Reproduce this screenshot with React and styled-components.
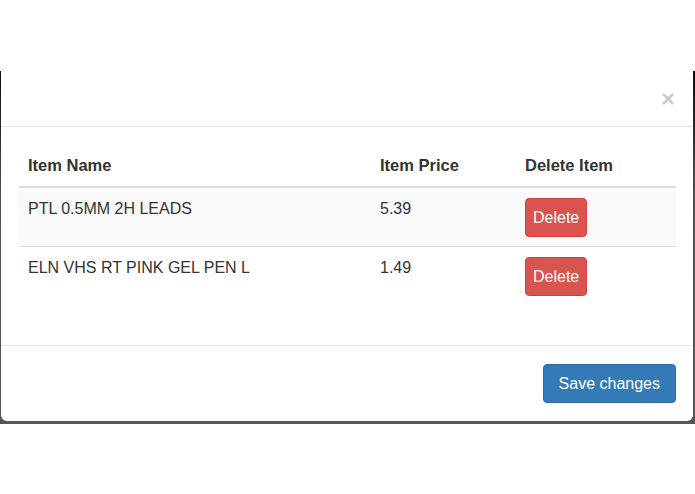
import React from 'react';
import styled, { createGlobalStyle } from 'styled-components';

const GlobalStyle = createGlobalStyle`
    html, body {
        margin: 0;
        padding: 0;
        background: #ffffff;
        font-family: "Liberation Sans", Arial, sans-serif;
        color: #333333;
    }
`

const Page = styled.div`
    width: 695px;
    height: 494px;
    padding-top: 71px;
    box-sizing: border-box;
    overflow: hidden;
`

const Backdrop = styled.div`
    background: linear-gradient(#0c0c0c, #4f4f4f 35%, #555555);
    padding: 0 2px 3px 1px;
`

const Modal = styled.div`
    background: #ffffff;
    border-radius: 0 0 6px 6px;
    overflow: hidden;
`

const Header = styled.div`
    height: 55px;
    padding: 0 18px;
    display: flex;
    align-items: center;
    justify-content: flex-end;
    border-bottom: 1px solid #e5e5e5;
`

const CloseButton = styled.button`
    border: 0;
    background: none;
    padding: 0;
    margin-top: 1px;
    font-family: "Liberation Sans", Arial, sans-serif;
    font-size: 24px;
    font-weight: 700;
    line-height: 1;
    color: #000000;
    opacity: 0.2;
    cursor: pointer;
`

const Body = styled.div`
    padding: 17px 17px 17px 18px;
`

const Table = styled.table`
    width: 100%;
    border-collapse: collapse;
    border-spacing: 0;
    margin-bottom: 23px;
    font-size: 16px;

    th, td {
        padding: 9px;
        text-align: left;
        vertical-align: top;
        line-height: 24px;
    }

    th {
        font-weight: 700;
        font-size: 16.5px;
        border-bottom: 2px solid #dddddd;
        vertical-align: bottom;
    }

    td {
        border-top: 1px solid #dddddd;
    }

    thead tr th {
        border-top: 0;
    }

    tbody tr:first-child td {
        border-top: 0;
    }
`

const Row = styled.tr`
    background: ${props => props.striped ? '#f9f9f9' : 'transparent'};
`

const Button = styled.button`
    font-family: "Liberation Sans", Arial, sans-serif;
    font-size: 16px;
    line-height: 24px;
    color: #ffffff;
    border: 1px solid;
    border-radius: 4px;
    cursor: pointer;
`

const DeleteButton = styled(Button)`
    height: 39px;
    padding: 0 7px;
    margin-top: 1px;
    background: #d9534f;
    border-color: #d43f3a;
`

const Footer = styled.div`
    padding: 18px 17px 18px;
    border-top: 1px solid #e5e5e5;
    display: flex;
    justify-content: flex-end;
`

const SaveButton = styled(Button)`
    height: 39px;
    padding: 0 15px;
    background: #337ab7;
    border-color: #2e6da4;
`

const items = [
    { name: 'PTL 0.5MM 2H LEADS', price: '5.39' },
    { name: 'ELN VHS RT PINK GEL PEN L', price: '1.49' },
];

function App() {
    return (
        <Page>
            <GlobalStyle />
            <Backdrop>
                <Modal>
                    <Header>
                        <CloseButton>×</CloseButton>
                    </Header>
                    <Body>
                        <Table>
                            <colgroup>
                                <col style={{ width: '352px' }} />
                                <col style={{ width: '145px' }} />
                                <col />
                            </colgroup>
                            <thead>
                                <tr>
                                    <th>Item Name</th>
                                    <th>Item Price</th>
                                    <th>Delete Item</th>
                                </tr>
                            </thead>
                            <tbody>
                                {items.map((item, index) => (
                                    <Row key={index} striped={index % 2 === 0}>
                                        <td>{item.name}</td>
                                        <td>{item.price}</td>
                                        <td><DeleteButton>Delete</DeleteButton></td>
                                    </Row>
                                ))}
                            </tbody>
                        </Table>
                    </Body>
                    <Footer>
                        <SaveButton>Save changes</SaveButton>
                    </Footer>
                </Modal>
            </Backdrop>
        </Page>
    )
}

export default App
